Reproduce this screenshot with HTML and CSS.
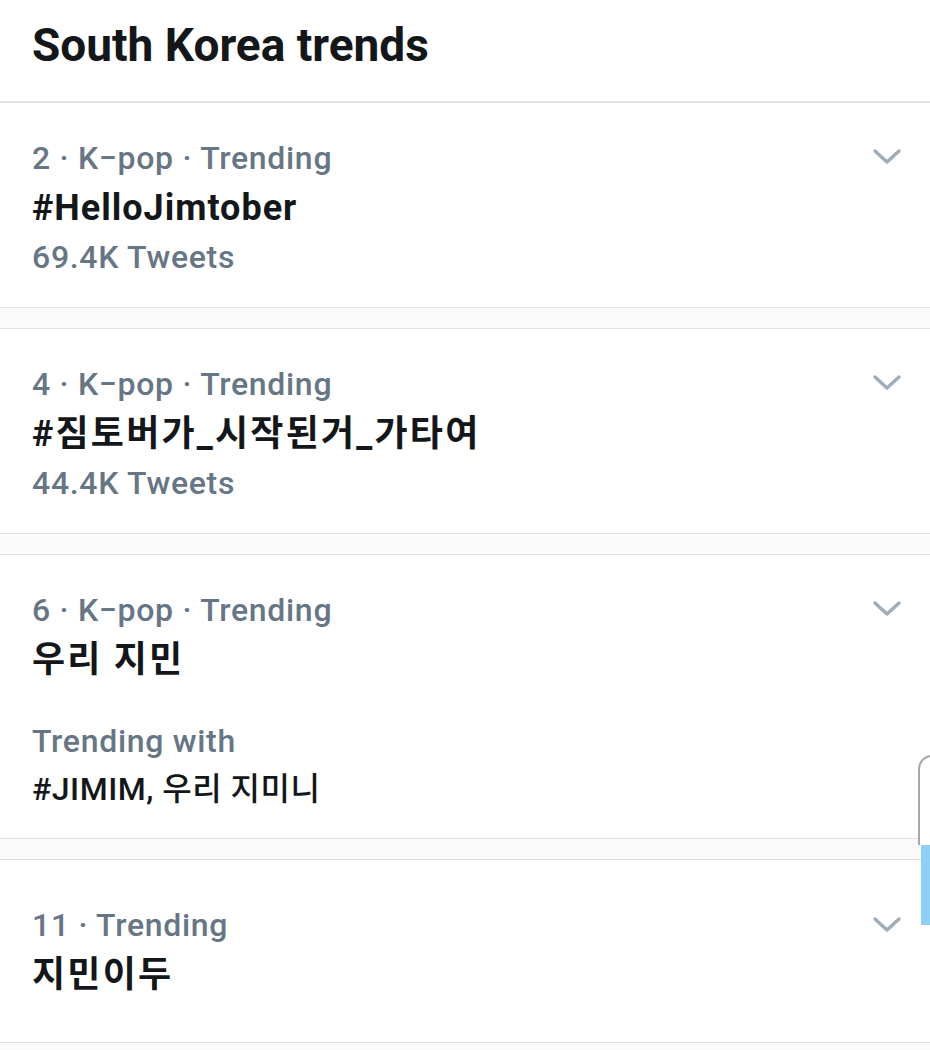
FILE: index.html
```html
<!DOCTYPE html>
<html lang="ko">
<head>
  <meta charset="UTF-8" />
  <meta name="viewport" content="width=device-width, initial-scale=1.0" />
  <title>South Korea trends</title>
  <link rel="stylesheet" href="styles.css">
</head>
<body>
  <div class="header">
    <h1>South Korea trends</h1>
  </div>

  <div class="trend">
    <div class="meta">2 · K−pop · Trending</div>
    <div class="name">#HelloJimtober</div>
    <div class="count">69.4K Tweets</div>
    <svg class="chevron" viewBox="0 0 30 18"><path d="M3 3 L15 14 L27 3" /></svg>
  </div>

  <div class="trend">
    <div class="meta">4 · K−pop · Trending</div>
    <div class="name ko">#짐토버가_시작된거_가타여</div>
    <div class="count">44.4K Tweets</div>
    <svg class="chevron" viewBox="0 0 30 18"><path d="M3 3 L15 14 L27 3" /></svg>
  </div>

  <div class="trend">
    <div class="meta">6 · K−pop · Trending</div>
    <div class="name ko">우리 지민</div>
    <div class="with">
      <div class="with-label">Trending with</div>
      <div class="with-tags">#JIMIM, 우리 지미니</div>
    </div>
    <svg class="chevron" viewBox="0 0 30 18"><path d="M3 3 L15 14 L27 3" /></svg>
  </div>

  <div class="trend last">
    <div class="meta">11 · Trending</div>
    <div class="name ko">지민이두</div>
    <svg class="chevron" viewBox="0 0 30 18"><path d="M3 3 L15 14 L27 3" /></svg>
  </div>

  <div class="scroll-handle"></div>
  <div class="scroll-thumb"></div>
</body>
</html>
```

FILE: styles.css
```css
*, *::before, *::after { box-sizing: border-box; }
body {
  font-family: Roboto, "Noto Sans CJK KR", sans-serif;
  background-color: #fafafa;
  margin: 0;
  padding: 0;
  overflow: hidden;
}
.header {
  background-color: #fff;
  height: 102px;
  padding: 0 32px;
  display: flex;
  align-items: center;
  border-bottom: 1px solid #e6e6e6;
}
.header h1 {
  margin: 0 0 12px;
  font-size: 46px;
  font-weight: 700;
  color: #14171a;
}
.trend {
  position: relative;
  background-color: #fff;
  padding: 30px 32px 26px;
  border-top: 1px solid #e1e1e1;
  border-bottom: 1px solid #e1e1e1;
  margin-bottom: 20px;
}
.trend.last {
  padding: 40px 32px 42px;
}
.meta, .count, .with-label {
  font-size: 32px;
  font-weight: 500;
  letter-spacing: 0.7px;
  line-height: 50px;
  color: #667685;
}
.count {
  line-height: 48px;
}
.name {
  font-size: 36px;
  line-height: 50px;
  font-weight: 700;
  letter-spacing: 1px;
  color: #14171a;
}
.name.ko {
  letter-spacing: 2.2px;
}
.with {
  margin-top: 31px;
}
.with-tags {
  font-size: 32px;
  font-weight: 500;
  letter-spacing: 0.5px;
  line-height: 46px;
  color: #14171a;
}
.chevron {
  position: absolute;
  top: 45px;
  right: 28px;
  width: 30px;
  height: 18px;
  fill: none;
  stroke: #9fadbb;
  stroke-width: 3.5;
  stroke-linecap: round;
  stroke-linejoin: round;
}
.trend.last .chevron {
  top: 56px;
}
.scroll-handle {
  position: absolute;
  top: 755px;
  left: 918px;
  width: 30px;
  height: 90px;
  border: 2px solid #a8a8a8;
  border-radius: 14px 0 0 0;
  border-bottom: none;
  background-color: #fff;
}
.scroll-thumb {
  position: absolute;
  top: 845px;
  left: 921px;
  width: 9px;
  height: 80px;
  background-color: #8ecff5;
}
```
